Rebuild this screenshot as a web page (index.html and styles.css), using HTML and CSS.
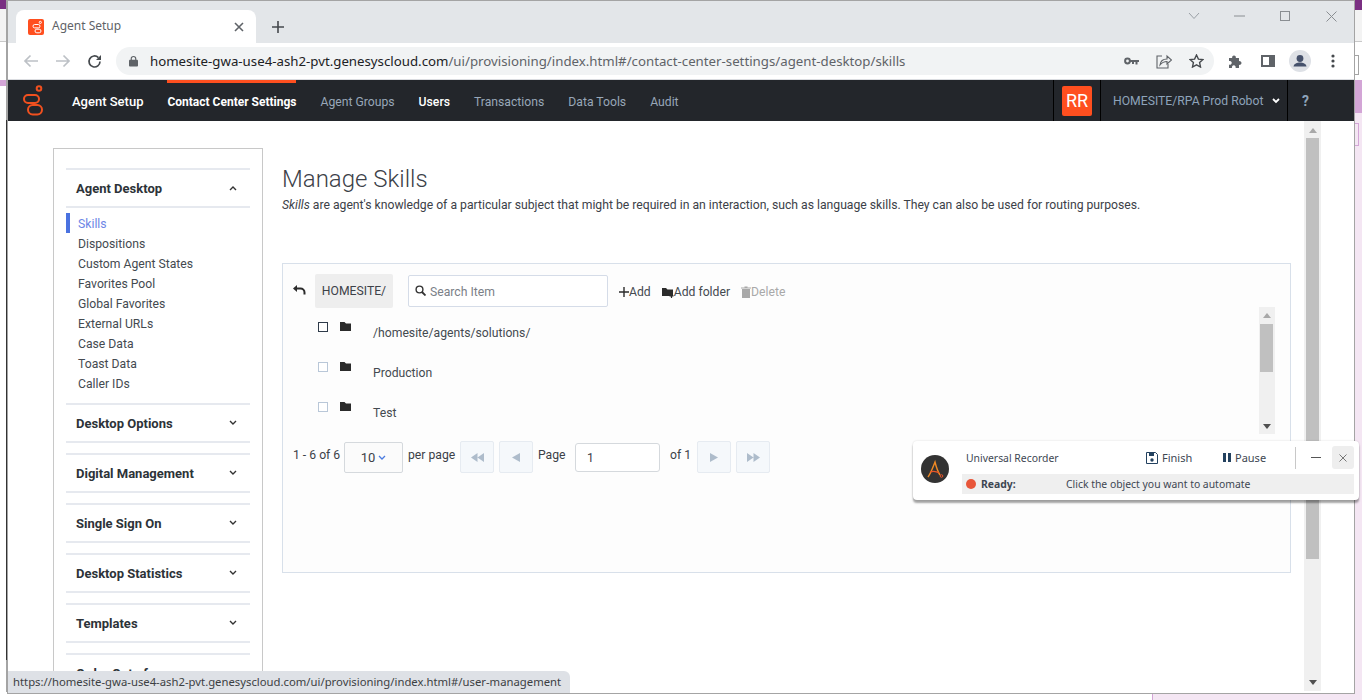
FILE: index.html
```html
<!DOCTYPE html>
<html lang="en">
<head>
    <meta charset="UTF-8">
    <title>Agent Setup</title>
    <link rel="stylesheet" href="styles.css">
</head>
<body>
<div class="desktop">
    <!-- windows behind the browser -->
    <div class="back back-left"></div>
    <div class="back back-edge"></div>
    <div class="back back-right"></div>
    <div class="back back-mark mark-gray"></div>
    <div class="back back-mark mark-pink"></div>
    <div class="back back-bottom"></div>

    <div class="window">
        <!-- tab strip -->
        <div class="tabstrip">
            <div class="tab">
                <svg class="favicon" width="16" height="16" viewBox="0 0 16 16"><rect width="16" height="16" rx="2" fill="#ff4f1f"/><g fill="none" stroke="#fff" stroke-width="1"><circle cx="12.3" cy="3.4" r="1.1"/><rect x="5" y="5.5" width="7" height="3.4" rx="1.7"/><rect x="7" y="10.2" width="6" height="3.6" rx="1.8"/></g></svg>
                <span class="tab-title">Agent Setup</span>
                <svg class="tab-close" width="10" height="10" viewBox="0 0 10 10"><path d="M1 1l8 8M9 1l-8 8" stroke="#5f6368" stroke-width="1.6"/></svg>
            </div>
            <svg class="new-tab" width="12" height="12" viewBox="0 0 12 12"><path d="M6 0v12M0 6h12" stroke="#45494d" stroke-width="1.6"/></svg>
            <div class="win-controls">
                <svg width="12" height="8" viewBox="0 0 12 8"><path d="M1 1l5 5.5L11 1" fill="none" stroke="#9aa0a6" stroke-width="1"/></svg>
                <svg width="11" height="2" viewBox="0 0 11 2"><path d="M0 1h11" stroke="#8a8e92" stroke-width="1"/></svg>
                <svg width="10" height="10" viewBox="0 0 10 10"><rect x=".5" y=".5" width="9" height="9" fill="none" stroke="#8a8e92"/></svg>
                <svg width="11" height="11" viewBox="0 0 11 11"><path d="M.5.5l10 10M10.5.5l-10 10" stroke="#8a8e92"/></svg>
            </div>
        </div>

        <!-- address bar -->
        <div class="toolbar">
            <svg class="tool-icon" width="16" height="14" viewBox="0 0 16 14"><path d="M15 7H2M7.500 1.500L2 7l5.500 5.500" fill="none" stroke="#bdc1c6" stroke-width="1.700"/></svg>
            <svg class="tool-icon" width="16" height="14" viewBox="0 0 16 14"><path d="M1 7h13M8.500 1.500L14 7l-5.500 5.500" fill="none" stroke="#bdc1c6" stroke-width="1.700"/></svg>
            <svg class="tool-icon" width="15" height="15" viewBox="0 0 15 15"><path d="M13 7.500a5.500 5.500 0 1 1-1.600-3.900" fill="none" stroke="#45494d" stroke-width="1.700"/><path d="M14 1v5H9z" fill="#45494d"/></svg>
            <div class="omnibox">
                <svg width="9" height="12" viewBox="0 0 10 12"><path d="M2.500 5V3.500a2.500 2.500 0 0 1 5 0V5" fill="none" stroke="#5f6368" stroke-width="1.300"/><rect y="4.500" width="10" height="7.500" rx="1" fill="#5f6368"/></svg>
                <span class="url"><span class="url-host">homesite-gwa-use4-ash2-pvt.genesyscloud.com</span>/ui/provisioning/index.html#/contact-center-settings/agent-desktop/skills</span>
                <div class="omni-icons">
                    <svg width="15" height="8" viewBox="0 0 15 8"><circle cx="3.500" cy="4" r="2.400" fill="none" stroke="#5f6368" stroke-width="2"/><path d="M6 3h9v2h-1.500v2.500h-2V5H10v2H8V5H6z" fill="#5f6368"/></svg>
                    <svg width="16" height="15" viewBox="0 0 16 15"><path d="M6 2H1v12h11v-4" fill="none" stroke="#5f6368" stroke-width="1.100"/><path d="M4 11c.5-4 3-6 7-6V2l4.500 4L11 10V7.500c-3 0-5 1-7 3.500z" fill="none" stroke="#5f6368" stroke-width="1.100"/></svg>
                    <svg width="15" height="14" viewBox="0 0 15 14"><path d="M7.500 1l1.900 4.100 4.500.5-3.300 3 .9 4.400-4-2.200-4 2.200.9-4.400-3.300-3 4.500-.5z" fill="none" stroke="#45494d" stroke-width="1.400"/></svg>
                </div>
            </div>
            <div class="ext-icons">
                <svg width="15" height="15" viewBox="0 0 15 15"><path d="M1 4h3.200a1.900 1.900 0 1 1 3.600 0H11v3.200a1.900 1.900 0 1 1 0 3.600V14H7.500a1.900 1.900 0 1 0-3.400 0H1v-3.500a1.900 1.900 0 1 0 0-3.400z" fill="#5f6368"/></svg>
                <svg width="14" height="12" viewBox="0 0 14 12"><rect x="1" y="1" width="12" height="10" fill="none" stroke="#5f6368" stroke-width="2"/><rect x="8" y="1" width="5" height="10" fill="#5f6368"/></svg>
                <svg width="22" height="22" viewBox="0 0 22 22"><circle cx="11" cy="11" r="11" fill="#dee1e6"/><circle cx="11" cy="8.500" r="3.400" fill="#45516b"/><path d="M4.500 16.500c.5-3 3.500-4 6.500-4s6 1 6.500 4z" fill="#45516b"/></svg>
                <svg width="4" height="14" viewBox="0 0 4 14"><g fill="#45494d"><circle cx="2" cy="2" r="1.600"/><circle cx="2" cy="7" r="1.600"/><circle cx="2" cy="12" r="1.600"/></g></svg>
            </div>
        </div>

        <!-- app header -->
        <nav class="appnav">
            <svg class="logo" width="20" height="31" viewBox="0 0 20 31"><g fill="none" stroke="#f1501f" stroke-width="2"><circle cx="16" cy="3.500" r="2.300"/><rect x="1" y="10" width="15" height="8" rx="4"/><rect x="5" y="20" width="14" height="9.500" rx="4.700"/></g></svg>
            <a class="nav-item nav-white">Agent Setup</a>
            <a class="nav-item nav-active">Contact Center Settings</a>
            <a class="nav-item">Agent Groups</a>
            <a class="nav-item nav-strong">Users</a>
            <a class="nav-item">Transactions</a>
            <a class="nav-item">Data Tools</a>
            <a class="nav-item">Audit</a>
            <div class="nav-right">
                <div class="nav-cell cell-avatar"><span class="avatar">RR</span></div>
                <div class="nav-cell cell-user">
                    <span>HOMESITE/RPA Prod Robot</span>
                    <svg width="8" height="6" viewBox="0 0 8 6"><path d="M1 1l3 3 3-3" fill="none" stroke="#fff" stroke-width="1.800"/></svg>
                </div>
                <div class="nav-cell cell-help">?</div>
            </div>
        </nav>

        <div class="content">
            <aside class="sidebar">
                <section class="side-section">
                    <div class="side-head"><span>Agent Desktop</span>
                        <svg width="8" height="6" viewBox="0 0 8 6"><path d="M1 5l3-3 3 3" fill="none" stroke="#333" stroke-width="1.400"/></svg>
                    </div>
                    <ul class="side-list">
                        <li class="side-current">Skills</li>
                        <li>Dispositions</li>
                        <li>Custom Agent States</li>
                        <li>Favorites Pool</li>
                        <li>Global Favorites</li>
                        <li>External URLs</li>
                        <li>Case Data</li>
                        <li>Toast Data</li>
                        <li>Caller IDs</li>
                    </ul>
                </section>
                <section class="side-section"><div class="side-head"><span>Desktop Options</span><svg width="8" height="6" viewBox="0 0 8 6"><path d="M1 1l3 3 3-3" fill="none" stroke="#333" stroke-width="1.400"/></svg></div></section>
                <section class="side-section"><div class="side-head"><span>Digital Management</span><svg width="8" height="6" viewBox="0 0 8 6"><path d="M1 1l3 3 3-3" fill="none" stroke="#333" stroke-width="1.400"/></svg></div></section>
                <section class="side-section"><div class="side-head"><span>Single Sign On</span><svg width="8" height="6" viewBox="0 0 8 6"><path d="M1 1l3 3 3-3" fill="none" stroke="#333" stroke-width="1.400"/></svg></div></section>
                <section class="side-section"><div class="side-head"><span>Desktop Statistics</span><svg width="8" height="6" viewBox="0 0 8 6"><path d="M1 1l3 3 3-3" fill="none" stroke="#333" stroke-width="1.400"/></svg></div></section>
                <section class="side-section"><div class="side-head"><span>Templates</span><svg width="8" height="6" viewBox="0 0 8 6"><path d="M1 1l3 3 3-3" fill="none" stroke="#333" stroke-width="1.400"/></svg></div></section>
                <section class="side-section"><div class="side-head"><span>Order Out of</span></div></section>
            </aside>

            <main class="main">
                <h1 class="page-title">Manage Skills</h1>
                <p class="page-desc"><em>Skills</em> are agent's knowledge of a particular subject that might be required in an interaction, such as language skills. They can also be used for routing purposes.</p>

                <div class="panel">
                    <div class="panel-tools">
                        <svg class="undo" width="13" height="10" viewBox="0 0 13 10"><path d="M3 3.500h4.500a4 4 0 0 1 4 4V9.500" fill="none" stroke="#2b2b2b" stroke-width="2"/><path d="M0 3.500L4 0v7z" fill="#2b2b2b"/></svg>
                        <span class="crumb">HOMESITE/</span>
                        <div class="search">
                            <svg width="11" height="11" viewBox="0 0 11 11"><circle cx="4.500" cy="4.500" r="3.400" fill="none" stroke="#333" stroke-width="1.400"/><path d="M7 7l3.500 3.500" stroke="#333" stroke-width="1.800"/></svg>
                            <span>Search Item</span>
                        </div>
                        <span class="tool tool-add"><svg width="10" height="10" viewBox="0 0 10 10"><path d="M5 0v10M0 5h10" stroke="#2b2b2b" stroke-width="1.400"/></svg>Add</span>
                        <span class="tool tool-folder"><svg width="12" height="11" viewBox="0 0 12 11"><path d="M0 1h4l1.500 1.500H11V9H0z" fill="#2b2b2b"/><path d="M9.500 6.500v4.500M7.500 8.800h4" stroke="#2b2b2b" stroke-width="1.200"/></svg>Add folder</span>
                        <span class="tool tool-delete"><svg width="10" height="12" viewBox="0 0 10 12"><path d="M0 1.500h10v1H0zM3.500.5h3v1h-3zM1 3h8v9H1z" fill="#a9a9a9"/></svg>Delete</span>
                    </div>

                    <div class="tree">
                        <div class="tree-rows">
                            <div class="tree-row">
                                <span class="check check-dark"></span>
                                <svg class="folder" width="11" height="9" viewBox="0 0 11 9"><path d="M0 0h4.500l1.500 1.500h5V9H0z" fill="#2b2b2b"/></svg>
                                <span class="tree-name">/homesite/agents/solutions/</span>
                            </div>
                            <div class="tree-row">
                                <span class="check"></span>
                                <svg class="folder" width="11" height="9" viewBox="0 0 11 9"><path d="M0 0h4.500l1.500 1.500h5V9H0z" fill="#2b2b2b"/></svg>
                                <span class="tree-name">Production</span>
                            </div>
                            <div class="tree-row">
                                <span class="check"></span>
                                <svg class="folder" width="11" height="9" viewBox="0 0 11 9"><path d="M0 0h4.500l1.500 1.500h5V9H0z" fill="#2b2b2b"/></svg>
                                <span class="tree-name">Test</span>
                            </div>
                        </div>
                        <div class="scrollbar tree-scroll">
                            <svg width="8" height="5" viewBox="0 0 8 5"><path d="M4 0l4 5H0z" fill="#a8a8a8"/></svg>
                            <div class="thumb"></div>
                            <svg class="arrow-end" width="8" height="5" viewBox="0 0 8 5"><path d="M4 5L0 0h8z" fill="#505050"/></svg>
                        </div>
                    </div>

                    <div class="pager">
                        <span class="pager-count">1 - 6 of 6</span>
                        <span class="page-size">10<svg width="8" height="5" viewBox="0 0 8 5"><path d="M1 1l3 3 3-3" fill="none" stroke="#4a7be0" stroke-width="1.300"/></svg></span>
                        <span class="per-page">per page</span>
                        <span class="page-btn"><svg width="13" height="9" viewBox="0 0 13 9"><path d="M6.500 0v9L0 4.500zM13 0v9L6.500 4.500z" fill="#aebccb"/></svg></span>
                        <span class="page-btn"><svg width="8" height="9" viewBox="0 0 8 9"><path d="M8 0v9L0 4.500z" fill="#aebccb"/></svg></span>
                        <span class="page-label">Page</span>
                        <span class="page-input">1</span>
                        <span class="page-of">of 1</span>
                        <span class="page-btn"><svg width="8" height="9" viewBox="0 0 8 9"><path d="M0 0v9l8-4.500z" fill="#aebccb"/></svg></span>
                        <span class="page-btn"><svg width="13" height="9" viewBox="0 0 13 9"><path d="M0 0v9l6.500-4.500zM6.500 0v9L13 4.500z" fill="#aebccb"/></svg></span>
                    </div>
                </div>
            </main>

            <div class="scrollbar page-scroll">
                <svg width="8" height="5" viewBox="0 0 8 5"><path d="M4 0l4 5H0z" fill="#a8a8a8"/></svg>
                <div class="thumb"></div>
                <svg class="arrow-end" width="8" height="5" viewBox="0 0 8 5"><path d="M4 5L0 0h8z" fill="#505050"/></svg>
            </div>
        </div>

        <div class="status-link">https://homesite-gwa-use4-ash2-pvt.genesyscloud.com/ui/provisioning/index.html#/user-management</div>
    </div>

    <!-- floating recorder -->
    <div class="recorder">
        <svg class="rec-logo" width="28" height="28" viewBox="0 0 28 28"><circle cx="14" cy="14" r="14" fill="#333"/><path d="M7 22c3-4 5-10 7-15 1 4 3 10 5 13" fill="none" stroke="#f08a24" stroke-width="1.400"/><path d="M9 17c3-1 6-1 9 1" fill="none" stroke="#e8542a" stroke-width="1.200"/><circle cx="20.500" cy="21" r="1.300" fill="none" stroke="#e8542a"/></svg>
        <div class="rec-body">
            <div class="rec-top">
                <span class="rec-name">Universal Recorder</span>
                <span class="rec-action rec-finish"><svg width="12" height="12" viewBox="0 0 12 12"><path d="M.5.5h9l2 2v9H.500z" fill="none" stroke="#23415f"/><path d="M3 1h5v3H3z" fill="#23415f"/><circle cx="6" cy="8" r="1.700" fill="#23415f"/></svg>Finish</span>
                <span class="rec-action rec-pause"><svg width="8" height="9" viewBox="0 0 8 9"><path d="M0 0h3v9H0zM5 0h3v9H5z" fill="#23415f"/></svg>Pause</span>
                <span class="rec-sep"></span>
                <svg class="rec-min" width="10" height="1" viewBox="0 0 10 1"><path d="M0 .5h10" stroke="#555"/></svg>
                <span class="rec-close"><svg width="8" height="8" viewBox="0 0 8 8"><path d="M.5.500l7 7M7.500.500l-7 7" stroke="#777"/></svg></span>
            </div>
            <div class="rec-status">
                <span class="rec-dot"></span>
                <b class="rec-ready">Ready:</b>
                <span>Click the object you want to automate</span>
            </div>
        </div>
    </div>
</div>
</body>
</html>
```

FILE: styles.css
```css
/* Page and desktop behind the browser */
html, body {
    margin: 0;
    padding: 0;
    background: #fff;
}
.desktop {
    position: relative;
    width: 1362px;
    height: 700px;
    overflow: hidden;
    font-family: Roboto, sans-serif;
}
.back {
    position: absolute;
}
.back-left {
    left: 0;
    top: 0;
    width: 7px;
    height: 120px;
    background: linear-gradient(#7a2f82 0 9px, #f3f3f3 9px 41px, #c9c9c9 41px 42px, #fff 42px 80px, #d3a5d6 80px 86px, #fff 86px);
}
.back-edge {
    left: 6px;
    top: 0;
    width: 1px;
    height: 692px;
    background: linear-gradient(#a4a4a4 0 120px, #333 120px 660px, #a4a4a4 660px);
}
.back-right {
    right: 0;
    top: 0;
    width: 8px;
    height: 700px;
    background: linear-gradient(#7a2f82 0 10px, #f3f3f3 10px 41px, #c9c9c9 41px 42px, #fff 42px 80px, #d3a5d6 80px 113px, #f4e6f3 113px);
}
.back-mark {
    left: 1355px;
    width: 3px;
    border: 1px solid;
    border-left: 0;
}
.mark-gray {
    top: 55px;
    height: 18px;
    border-color: #a4a4a4;
}
.mark-pink {
    top: 123px;
    height: 21px;
    border-color: #d3a5d6;
}
.back-bottom {
    left: 1152px;
    top: 692px;
    width: 210px;
    height: 8px;
    background: #f4e6f3;
    border-left: 1px solid #d3a5d6;
}

/* Browser window */
.window {
    position: absolute;
    left: 7px;
    top: 0;
    width: 1346px;
    height: 692px;
    border: 1px solid #a4a4a4;
    background: #fff;
    display: flex;
    flex-direction: column;
    overflow: hidden;
}
.tabstrip {
    height: 42px;
    flex: none;
    background: #e3e6e9;
    display: flex;
    align-items: flex-end;
    padding-left: 8px;
    box-sizing: border-box;
}
.tab {
    width: 240px;
    height: 33px;
    box-sizing: border-box;
    background: #fff;
    border-radius: 8px 8px 0 0;
    display: flex;
    align-items: center;
    padding: 0 12px;
}
.favicon {
    margin-right: 8px;
}
.tab-title {
    flex: 1;
    margin-bottom: 2px;
    font: 12px "Noto Sans", sans-serif;
    color: #5f6368;
}
.new-tab {
    margin: 0 0 10px 16px;
}
.win-controls {
    margin-left: auto;
    align-self: flex-start;
    display: flex;
    align-items: center;
    height: 30px;
}
.win-controls svg:nth-child(1) { margin-right: 34px; }
.win-controls svg:nth-child(2) { margin-right: 35px; }
.win-controls svg:nth-child(3) { margin-right: 36px; }
.win-controls svg:nth-child(4) { margin-right: 17px; }

.toolbar {
    height: 37px;
    flex: none;
    box-sizing: border-box;
    border-bottom: 1px solid #dadce0;
    display: flex;
    align-items: center;
    padding: 0 0 0 15px;
}
.tool-icon {
    margin-right: 16px;
}
.tool-icon:nth-child(3) {
    margin-right: 14px;
}
.omnibox {
    width: 1098px;
    height: 28px;
    border-radius: 14px;
    background: #f1f3f4;
    display: flex;
    align-items: center;
    padding: 0 10px 0 13px;
    box-sizing: border-box;
}
.url {
    margin-left: 12px;
    font: 13.25px "Noto Sans", sans-serif;
    color: #5f6368;
    white-space: nowrap;
}
.url-host {
    color: #202124;
}
.omni-icons {
    margin-left: auto;
    display: flex;
    align-items: center;
    gap: 17px;
}
.ext-icons {
    display: flex;
    align-items: center;
    margin-left: 14px;
}
.ext-icons svg:nth-child(1) { margin-right: 18px; }
.ext-icons svg:nth-child(2) { margin-right: 14px; }
.ext-icons svg:nth-child(3) { margin-right: 20px; }

/* App header */
.appnav {
    height: 41px;
    flex: none;
    background: #23262b;
    display: flex;
    align-items: center;
    font-size: 12.2px;
    color: #98a7b8;
}
.logo {
    margin: 0 29px 0 15px;
}
.nav-item {
    margin-right: 24px;
    height: 41px;
    line-height: 44px;
    box-sizing: border-box;
}
.nav-white, .nav-strong {
    color: #fff;
    font-weight: 500;
}
.nav-white {
    font-size: 13px;
    line-height: 43px;
}
.nav-active {
    color: #fff;
    font-size: 12px;
    font-weight: 700;
    border-top: 3px solid #ff4f1f;
    line-height: 38px;
}
.nav-right {
    margin-left: auto;
    display: flex;
    height: 41px;
}
.nav-cell {
    display: flex;
    align-items: center;
    border-left: 1px solid #000;
}
.cell-avatar {
    width: 47px;
    box-sizing: border-box;
    padding-left: 8px;
}
.avatar {
    width: 30px;
    height: 30px;
    background: #ff4f1f;
    border-radius: 2px;
    color: #fff;
    font-size: 18px;
    text-align: center;
    line-height: 30px;
}
.cell-user {
    width: 187px;
    box-sizing: border-box;
    padding-left: 12px;
    gap: 9px;
    color: #8ea3ba;
}
.cell-help {
    width: 67px;
    box-sizing: border-box;
    padding-left: 14px;
    font-weight: 700;
    font-size: 14px;
    color: #8ea3ba;
}

/* Content below the header */
.content {
    flex: 1;
    display: flex;
    align-items: flex-start;
    min-height: 0;
    padding-left: 45px;
    overflow: hidden;
}
.sidebar {
    width: 210px;
    height: 600px;
    flex: none;
    box-sizing: border-box;
    margin-top: 27px;
    padding: 19px 12px 0;
    border: 1px solid #c8c8c8;
    background: #fff;
}
.side-section {
    border-top: 2px solid #e6e9ef;
    margin-bottom: 10px;
}
.side-head {
    height: 38px;
    box-sizing: border-box;
    border-bottom: 2px solid #e6e9ef;
    display: flex;
    align-items: center;
    justify-content: space-between;
    padding: 0 13px 0 10px;
    font-size: 13px;
    font-weight: 700;
    color: #2d3338;
}
.side-list {
    list-style: none;
    margin: 5px 0 10px;
    padding: 0;
    font-size: 12.2px;
    color: #444a50;
}
.side-list li {
    height: 20px;
    line-height: 23px;
    padding-left: 12px;
}
.side-list .side-current {
    color: #6d86e6;
    border-left: 4px solid #4a72e0;
    padding-left: 8px;
}

.main {
    width: 1009px;
    flex: none;
    margin-left: 19px;
}
.page-title {
    margin: 43px 0 0;
    font-size: 24px;
    line-height: 30px;
    font-weight: 300;
    color: #3c4148;
}
.page-desc {
    margin: 3px 0 0;
    font-size: 12.2px;
    line-height: 16px;
    color: #3c4148;
}
.panel {
    height: 310px;
    box-sizing: border-box;
    margin-top: 50px;
    border: 1px solid #d8e0ea;
    background: #fdfdfd;
    padding: 10px 15px 0 10px;
    font-size: 12.2px;
    color: #444a50;
}
.panel-tools {
    display: flex;
    align-items: center;
    height: 34px;
}
.undo {
    margin: 0 9px 2px 0;
}
.crumb {
    width: 78px;
    height: 34px;
    line-height: 35px;
    text-align: center;
    background: #eee;
    border-radius: 2px;
    color: #3c4148;
}
.search {
    width: 200px;
    height: 32px;
    box-sizing: border-box;
    margin: 0 11px 0 15px;
    padding: 2px 0 0 6px;
    border: 1px solid #d5dce8;
    border-radius: 2px;
    background: #fff;
    display: flex;
    align-items: center;
    gap: 4px;
    color: #7b8087;
}
.search svg {
    margin-bottom: 3px;
}
.tool {
    display: flex;
    align-items: center;
    padding-top: 2px;
}
.tool-add { margin-right: 11px; }
.tool-folder { margin-right: 11px; }
.tool-delete { color: #a9a9a9; }

.tree {
    display: flex;
    height: 127px;
    margin-top: -1px;
}
.tree-rows {
    flex: 1;
}
.tree-row {
    height: 40px;
    display: flex;
    align-items: flex-start;
    padding: 9px 0 0 25px;
    box-sizing: border-box;
}
.check {
    width: 8px;
    height: 8px;
    margin-top: 6px;
    border: 1px solid #b9c7d8;
    background: #fff;
}
.check-dark {
    border-color: #2f3b4a;
}
.folder {
    margin: 6px 0 0 12px;
}
.tree-name {
    margin: 9px 0 0 22px;
    line-height: 16px;
}

/* Scrollbars */
.scrollbar {
    background: #f0f0f0;
    display: flex;
    flex-direction: column;
    align-items: center;
    box-sizing: border-box;
}
.thumb {
    background: #c0c0c0;
    width: 13px;
}
.arrow-end {
    margin-top: auto;
}
.tree-scroll {
    width: 16px;
    padding: 6px 0 5px;
}
.tree-scroll .thumb {
    height: 48px;
    margin: 6px 0 0 -1px;
}
.page-scroll {
    width: 17px;
    height: 570px;
    flex: none;
    margin-left: 13px;
    padding: 7px 0 6px;
}
.page-scroll .thumb {
    height: 421px;
    margin-top: 5px;
}

/* Pager */
.pager {
    display: flex;
    align-items: center;
    height: 32px;
    margin-top: 7px;
    color: #3c4148;
}
.pager-count {
    width: 51px;
}
.page-size {
    width: 59px;
    height: 31px;
    box-sizing: border-box;
    border: 1px solid #d5d9dd;
    border-radius: 2px;
    background: #fbfbfb;
    display: flex;
    align-items: center;
    justify-content: center;
    gap: 3px;
    font-size: 13px;
}
.per-page {
    width: 47px;
    margin: 0 5px;
    white-space: nowrap;
}
.page-btn {
    width: 34px;
    height: 32px;
    box-sizing: border-box;
    margin-right: 5px;
    border: 1px solid #e6ebf1;
    border-radius: 2px;
    background: #f5f8fb;
    display: flex;
    align-items: center;
    justify-content: center;
}
.page-label {
    width: 37px;
}
.page-input {
    width: 85px;
    height: 29px;
    box-sizing: border-box;
    border: 1px solid #d5d9dd;
    border-radius: 3px;
    background: #fff;
    line-height: 29px;
    padding-left: 11px;
}
.page-of {
    width: 20px;
    margin: 0 7px 0 10px;
    white-space: nowrap;
}
.pager-count, .per-page, .page-label, .page-of {
    margin-bottom: 4px;
}

/* Link preview at the bottom of the browser */
.status-link {
    position: absolute;
    left: 0;
    bottom: 0;
    width: 562px;
    height: 22px;
    box-sizing: border-box;
    padding-left: 5px;
    background: #dee1e6;
    border-radius: 0 6px 0 0;
    font: 11.3px/22px "Noto Sans", sans-serif;
    color: #3c4043;
    white-space: nowrap;
}

/* Floating recorder */
.recorder {
    position: absolute;
    left: 913px;
    top: 441px;
    width: 446px;
    height: 59px;
    background: #fff;
    border-radius: 4px;
    box-shadow: 0 3px 2px rgba(0, 0, 0, .35), 0 0 2px rgba(0, 0, 0, .15);
    display: flex;
    font: 10.4px "Noto Sans", sans-serif;
    color: #3d4652;
}
.rec-logo {
    margin: 14px 13px 0 8px;
    flex: none;
}
.rec-body {
    flex: 1;
    min-width: 0;
    padding-right: 5px;
}
.rec-top {
    height: 33px;
    display: flex;
    align-items: center;
    padding-left: 4px;
}
.rec-name {
    width: 180px;
}
.rec-action {
    display: flex;
    align-items: center;
    gap: 4px;
    font-size: 11px;
}
.rec-finish { width: 77px; }
.rec-pause { width: 72px; }
.rec-sep {
    width: 1px;
    height: 22px;
    background: #c8c8c8;
}
.rec-min {
    margin: 0 11px 0 15px;
}
.rec-close {
    width: 22px;
    height: 23px;
    background: #eee;
    border-radius: 3px;
    display: flex;
    align-items: center;
    justify-content: center;
}
.rec-status {
    height: 20px;
    background: #efefef;
    display: flex;
    align-items: center;
    padding-left: 4px;
}
.rec-dot {
    width: 10px;
    height: 10px;
    border-radius: 50%;
    background: #e8563a;
    margin-right: 5px;
}
.rec-ready {
    width: 85px;
}
```
